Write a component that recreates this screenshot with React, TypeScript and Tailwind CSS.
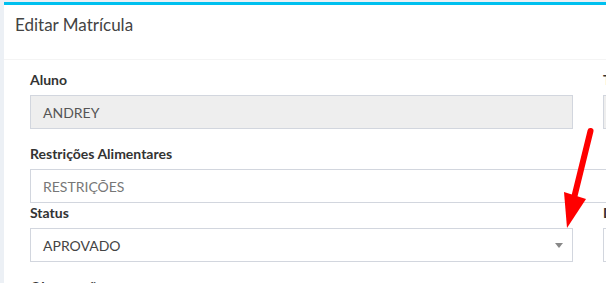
import React from "react";

function Label({ children }: { children: React.ReactNode }) {
  return (
    <div className="h-[20px] leading-[20px] text-[14px] font-bold text-[#333] mb-[5px] whitespace-nowrap">
      {children}
    </div>
  );
}

export default function App() {
  const font = { fontFamily: "Lato, 'Open Sans', sans-serif" };
  return (
    <div className="relative w-[606px] h-[283px] overflow-hidden bg-[#ecf0f5]" style={font}>
      <div className="absolute left-[4px] top-[2px] w-[1300px] h-[400px] bg-white border-t-[3px] border-[#00c0ef]">
        <div className="h-[55px] border-b border-[#f4f4f4] pl-[11px] pt-[8px]">
          <h3 className="text-[17px] leading-[24px] text-[#444]">Editar Matrícula</h3>
        </div>
        <div className="pt-[10px] pl-[26px]">
          <div className="flex gap-[30px]">
            <div className="w-[543px] mb-[15px]">
              <Label>Aluno</Label>
              <div className="h-[34px] border border-[#d2d6de] bg-[#eeeeee] px-[12px] flex items-center text-[14px] text-[#555]">
                ANDREY
              </div>
            </div>
            <div className="w-[543px] mb-[15px]">
              <Label>Turma</Label>
              <div className="h-[34px] border border-[#d2d6de] bg-[#eeeeee]" />
            </div>
          </div>
          <div>
            <Label>Restrições Alimentares</Label>
            <div className="h-[34px] w-[1116px] border border-[#d2d6de] bg-white px-[12px] flex items-center text-[14px] text-[#777]">
              RESTRIÇÕES
            </div>
          </div>
          <div className="flex gap-[30px]">
            <div className="w-[543px] mb-[15px]">
              <Label>Status</Label>
              <div className="relative h-[34px] border border-[#d2d6de] bg-white px-[12px] flex items-center text-[14px] text-[#444]">
                APROVADO
                <span className="absolute right-[9px] top-[14px] w-0 h-0 border-t-[5px] border-t-[#888] border-x-[4px] border-x-transparent" />
              </div>
            </div>
            <div className="w-[543px] mb-[15px]">
              <Label>Data</Label>
              <div className="h-[34px] border border-[#d2d6de] bg-white" />
            </div>
          </div>
          <Label>Observações</Label>
        </div>
      </div>
      <svg className="absolute left-0 top-0" width="606" height="283" viewBox="0 0 606 283">
        <line x1="590.5" y1="131" x2="574" y2="198" stroke="#ff0000" strokeWidth="6" strokeLinecap="round" />
        <polygon points="564,192 586,199 567,228" fill="#ff0000" />
      </svg>
    </div>
  );
}
